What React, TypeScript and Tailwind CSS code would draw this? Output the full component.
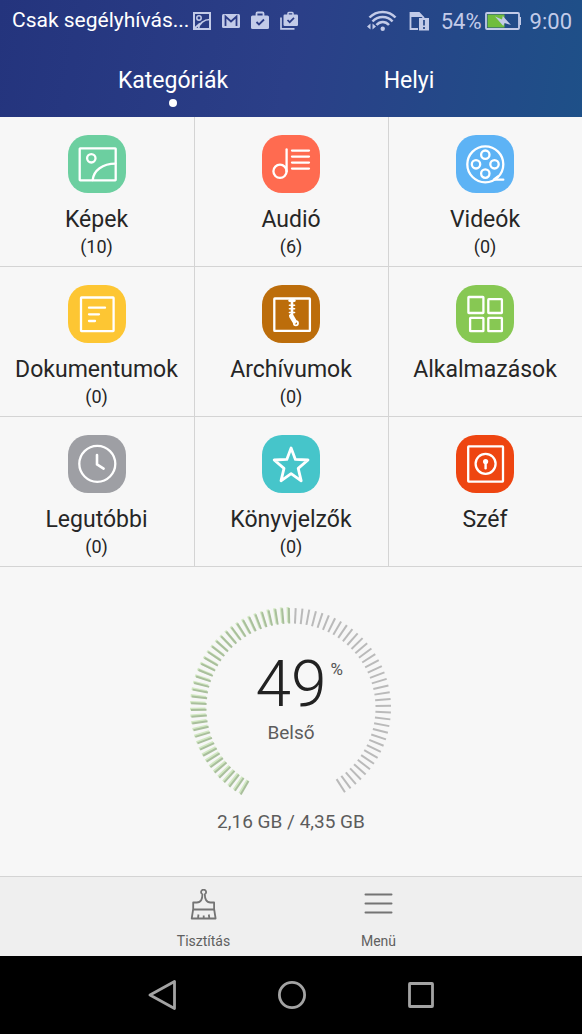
import type { ReactNode } from 'react';

type Category = { name: string; count?: number; color: string; icon: ReactNode };

const categories: Category[] = [
  {
    name: 'Képek',
    count: 10,
    color: 'bg-[#6ccfa0]',
    icon: (
      <>
        <rect x="11.7" y="13.3" width="36" height="32" rx="0.5" />
        <circle cx="23.3" cy="23.3" r="4.2" />
        <path d="M24.7 45C25.6 35.5 34.5 28.6 47.5 28.6" />
      </>
    ),
  },
  {
    name: 'Audió',
    count: 6,
    color: 'bg-[#ff6b50]',
    icon: (
      <>
        <circle cx="18" cy="36.3" r="6.6" />
        <path d="M24.6 14.5v22" />
        <path d="M30 15.6h17M30 21.6h17M30 27.6h17M30 33.6h17" />
      </>
    ),
  },
  {
    name: 'Videók',
    count: 0,
    color: 'bg-[#5db3f5]',
    icon: (
      <>
        <circle cx="29.3" cy="29.3" r="18" />
        <circle cx="29.3" cy="19.7" r="4.2" />
        <circle cx="38.5" cy="29.3" r="4.2" />
        <circle cx="29.3" cy="38.6" r="4.2" />
        <circle cx="20" cy="29.3" r="4.2" />
        <path d="M38.5 44.7h8.8M38 44.4l4-3" />
      </>
    ),
  },
  {
    name: 'Dokumentumok',
    count: 0,
    color: 'bg-[#fdc633]',
    icon: (
      <>
        <rect x="13" y="12.5" width="32.6" height="33.6" rx="0.5" />
        <path d="M21 22.7h16M21 29.3h10M21 36h6" />
      </>
    ),
  },
  {
    name: 'Archívumok',
    count: 0,
    color: 'bg-[#bc6d0b]',
    icon: (
      <>
        <rect x="12.3" y="13.5" width="35.6" height="32.4" rx="0.5" />
        <path d="M27.8 15.5h4.4" strokeWidth="3" />
        <path d="M30 15v14" strokeWidth="2.6" />
        <path d="M27.4 20.2h5.2M27.4 23.8h5.2M27.4 27.4h5.2" strokeWidth="1.5" />
        <path d="M29.3 31l3.2 5.4" strokeWidth="4.6" />
        <circle cx="33.9" cy="38.3" r="2.1" strokeWidth="1.8" />
      </>
    ),
  },
  {
    name: 'Alkalmazások',
    color: 'bg-[#87c853]',
    icon: (
      <>
        <rect x="12.4" y="12" width="15" height="16" rx="0.5" />
        <rect x="32.3" y="14.2" width="13.6" height="13.8" rx="0.5" />
        <rect x="14.1" y="32.8" width="13.3" height="13.4" rx="0.5" />
        <rect x="32.3" y="32.8" width="13.6" height="13.4" rx="0.5" />
      </>
    ),
  },
  {
    name: 'Legutóbbi',
    count: 0,
    color: 'bg-[#9e9fa4]',
    icon: (
      <>
        <circle cx="29.3" cy="28.8" r="18" />
        <path d="M29 20v9.4l6.6 4.2" strokeWidth="2.6" />
      </>
    ),
  },
  {
    name: 'Könyvjelzők',
    count: 0,
    color: 'bg-[#46c5ca]',
    icon: (
      <path
        d="M29.1 13L33.4 24.4L46 25L36.2 33.4L39.2 45.8L29.1 38.6L19 45.8L22 33.4L12.2 25L24.8 24.4Z"
        strokeWidth="2.8"
      />
    ),
  },
  {
    name: 'Széf',
    color: 'bg-[#ee4511]',
    icon: (
      <>
        <rect x="12.2" y="11.4" width="34.8" height="35.2" rx="0.5" />
        <circle cx="29.6" cy="28.8" r="10" />
        <circle cx="29.6" cy="26.6" r="2.6" fill="currentColor" stroke="none" />
        <path d="M29.6 27v6.2" strokeWidth="2.4" />
      </>
    ),
  },
];

function CategoryTile({ name, count, color, icon }: Category) {
  return (
    <button
      type="button"
      className="flex h-[150px] flex-col items-center border-b border-l border-[#d4d4d4] pr-px pt-[18px] [&:nth-child(3n+1)]:border-l-0"
    >
      <span className={`size-[58px] shrink-0 rounded-[20px] text-white ${color}`}>
        <svg
          viewBox="0 0 58 58"
          className="size-full"
          fill="none"
          stroke="currentColor"
          strokeWidth="2.3"
          strokeLinecap="round"
          strokeLinejoin="round"
          aria-hidden="true"
        >
          {icon}
        </svg>
      </span>
      <span className="mt-3 text-[23px] leading-[30px]">{name}</span>
      {count !== undefined && <span className="text-[18px] leading-6">({count})</span>}
    </button>
  );
}

function StatusBar() {
  return (
    <div className="flex h-[42px] items-center pl-3 pr-2.5 text-[22px] text-[#c3cbe8]">
      <span className="text-[21px] text-white">Csak segélyhívás...</span>
      <div className="ml-[3px] flex items-center gap-[9px]">
        <svg viewBox="0 0 20 20" className="size-5" fill="none" stroke="currentColor" strokeWidth="2" aria-hidden="true">
          <rect x="2" y="2" width="16" height="16" />
          <circle cx="7" cy="7" r="2.2" strokeWidth="1.5" />
          <path d="M6.5 18C7 12.5 12 8.5 18 8.5M3 17l5-4.5" strokeWidth="1.7" />
        </svg>
        <svg viewBox="0 0 20 20" className="size-5" aria-hidden="true">
          <rect x="1" y="3" width="18" height="14" rx="1.5" fill="currentColor" />
          <path d="M4.5 15V5.5L10 10.5l5.5-5V15" fill="none" stroke="#2b3b85" strokeWidth="1.8" />
        </svg>
        <svg viewBox="0 0 20 20" className="size-5" aria-hidden="true">
          <path d="M6.5 5V2.5q0-1 1-1h5q1 0 1 1V5" fill="none" stroke="currentColor" strokeWidth="1.8" />
          <rect x="1" y="4.5" width="18" height="13.5" rx="1.5" fill="currentColor" />
          <path d="M6.5 11l2.5 2.5 5-5" fill="none" stroke="#2b3b85" strokeWidth="1.8" />
        </svg>
        <svg viewBox="0 0 20 20" className="size-5" aria-hidden="true">
          <path d="M2 6.5v11.3h13.5" fill="none" stroke="currentColor" strokeWidth="1.7" />
          <path d="M9 4V2.2q0-.8.8-.8h3.4q.8 0 .8.8V4" fill="none" stroke="currentColor" strokeWidth="1.5" />
          <rect x="4.5" y="3.5" width="14.5" height="11.5" rx="1.2" fill="currentColor" />
          <path d="M8.5 9l2.2 2.2 4.3-4.3" fill="none" stroke="#2b3b85" strokeWidth="1.7" />
        </svg>
      </div>
      <div className="ml-auto flex items-center">
        <svg viewBox="0 0 31 22" className="mr-3 h-[22px] w-[31px]" aria-hidden="true">
          <g fill="none" stroke="currentColor" strokeWidth="2.5">
            <path d="M3.5 7.5C10.5 0 23 0 29.5 7.5" />
            <path d="M6.5 11.5C12 5.5 21.5 5.5 26.5 11.5" />
            <path d="M10.5 15C14 11 19.5 11 23 15" />
          </g>
          <circle cx="16.7" cy="18.7" r="2.2" fill="currentColor" />
          <path d="M4.5 13.5v6L1 16.5zM6.5 13.5v6l3.5-3z" fill="currentColor" />
        </svg>
        <svg viewBox="0 0 20 20" className="mr-3 size-5" aria-hidden="true">
          <path d="M9 18H1.5V2H10l4.5 4.5V7" fill="none" stroke="currentColor" strokeWidth="1.8" />
          <path d="M1.5 1.5H10l4 4.5H1.5z" fill="currentColor" />
          <rect x="10" y="7" width="10" height="12.5" fill="currentColor" />
          <path d="M15 9v5.5M15 16v2" stroke="#2d4d8c" strokeWidth="1.8" />
        </svg>
        <span>54%</span>
        <svg viewBox="0 0 37 20" className="ml-[3px] mr-2 h-5 w-[37px]" aria-hidden="true">
          <rect x="1" y="2" width="33" height="16" rx="1" fill="none" stroke="currentColor" strokeWidth="1.8" />
          <path d="M34.5 6H36v8h-1.5z" fill="currentColor" />
          <rect x="2.5" y="3.5" width="17" height="13" fill="#70bd3d" />
          <path d="M10 5.5l7 3 .8-3.5 8.2 9-6.5-2-1.2 3z" fill="currentColor" />
        </svg>
        <span>9:00</span>
      </div>
    </div>
  );
}

const TICKS = Array.from({ length: 77 }, (_, i) => -149.8 + i * 3.91);
const USED_TICKS = 39;

function StorageGauge() {
  return (
    <div className="relative size-[202px]">
      <svg viewBox="0 0 202 202" className="size-full" aria-hidden="true">
        <g transform="translate(-1 -1)" stroke="#d2e8c3" strokeWidth="2.6">
          {TICKS.slice(0, USED_TICKS).map((angle) => (
            <path key={angle} d="M101 1v15.5" transform={`rotate(${angle} 101 101)`} />
          ))}
        </g>
        {TICKS.map((angle, i) => (
          <path
            key={angle}
            d="M101 1v15.5"
            stroke={i < USED_TICKS ? '#a9bf9c' : '#bababa'}
            strokeWidth="2"
            transform={`rotate(${angle} 101 101)`}
          />
        ))}
      </svg>
      <div className="absolute inset-0 flex flex-col items-center pt-[46px]">
        <div className="relative text-[64px] font-light leading-[64px] text-[#222222]">
          49
          <span className="absolute left-full top-1.5 ml-1 text-[17px] font-normal leading-5 text-[#555555]">%</span>
        </div>
        <p className="mt-1 text-[19px] leading-6">Belső</p>
      </div>
    </div>
  );
}

export default function App() {
  return (
    <div className="flex min-h-screen flex-col bg-[#f7f7f7] font-['Roboto',sans-serif] text-[#262626]">
      <header className="h-[117px] bg-[linear-gradient(100deg,#24347d_0%,#2b3f88_50%,#1e5088_100%)] text-white">
        <StatusBar />
        <nav className="flex px-[55px] pt-[23px]">
          <a href="#kategoriak" aria-current="page" className="flex flex-1 flex-col items-center text-[23px] leading-8">
            Kategóriák
            <span className="mt-0.5 size-2 rounded-full bg-white" />
          </a>
          <a href="#helyi" className="flex flex-1 flex-col items-center text-[23px] leading-8">
            Helyi
          </a>
        </nav>
      </header>

      <main className="flex flex-1 flex-col">
        <div className="grid grid-cols-3">
          {categories.map((category) => (
            <CategoryTile key={category.name} {...category} />
          ))}
        </div>
        <section className="flex flex-1 flex-col items-center pt-10 text-[#5c5c5c]">
          <StorageGauge />
          <p className="mt-px text-[19px] leading-6">2,16 GB / 4,35 GB</p>
        </section>
      </main>

      <div className="flex h-20 justify-center border-t border-[#d4d4d4] bg-[#efefef] text-[14px] leading-5 text-[#606060]">
        <button type="button" className="flex w-[175px] flex-col items-center pt-3">
          <svg viewBox="0 0 30 32" className="h-8 w-[30px]" fill="none" stroke="#747474" strokeWidth="1.8" strokeLinejoin="round" aria-hidden="true">
            <path d="M13.4 5.3a2.5 2.5 0 1 1 2.4 0c0 2.5.2 4 1.2 5.7 1 1.7 2.5 2.5 4.5 2.5h3.6v6.5l1.5 9.5H2.7l1.5-9.5v-6.5h3.6c2 0 3.5-.8 4.5-2.5 1-1.7 1.1-3.2 1.1-5.7z" />
            <path d="M4.2 20.5h20.9M9 29l.5-3.5M14.7 29v-2.5M20.3 29l-.5-3.5" />
          </svg>
          <span className="mt-2.5">Tisztítás</span>
        </button>
        <button type="button" className="flex w-[175px] flex-col items-center pt-3">
          <svg viewBox="0 0 30 32" className="h-8 w-[30px]" stroke="#747474" strokeWidth="2" strokeLinecap="round" aria-hidden="true">
            <path d="M1.5 5.5h26M1.5 14.5h26M1.5 23.5h26" />
          </svg>
          <span className="mt-2.5">Menü</span>
        </button>
      </div>

      <nav className="flex h-[78px] items-center justify-center bg-black text-[#a3a3a3]">
        <button type="button" aria-label="Vissza" className="flex w-[129px] justify-center">
          <svg viewBox="0 0 30 30" className="size-[30px]" fill="none" stroke="currentColor" strokeWidth="2.8" strokeLinejoin="round" aria-hidden="true">
            <path d="M27.5 1.5v27L3 15z" />
          </svg>
        </button>
        <button type="button" aria-label="Kezdőlap" className="flex w-[129px] justify-center">
          <svg viewBox="0 0 30 30" className="size-[30px]" fill="none" stroke="currentColor" strokeWidth="2.8" aria-hidden="true">
            <circle cx="16" cy="15" r="12.6" />
          </svg>
        </button>
        <button type="button" aria-label="Legutóbbi alkalmazások" className="flex w-[129px] justify-center">
          <svg viewBox="0 0 30 30" className="size-[30px]" fill="none" stroke="currentColor" strokeWidth="2.8" strokeLinejoin="round" aria-hidden="true">
            <rect x="4.5" y="3.5" width="23" height="23" rx="0.5" />
          </svg>
        </button>
      </nav>
    </div>
  );
}
